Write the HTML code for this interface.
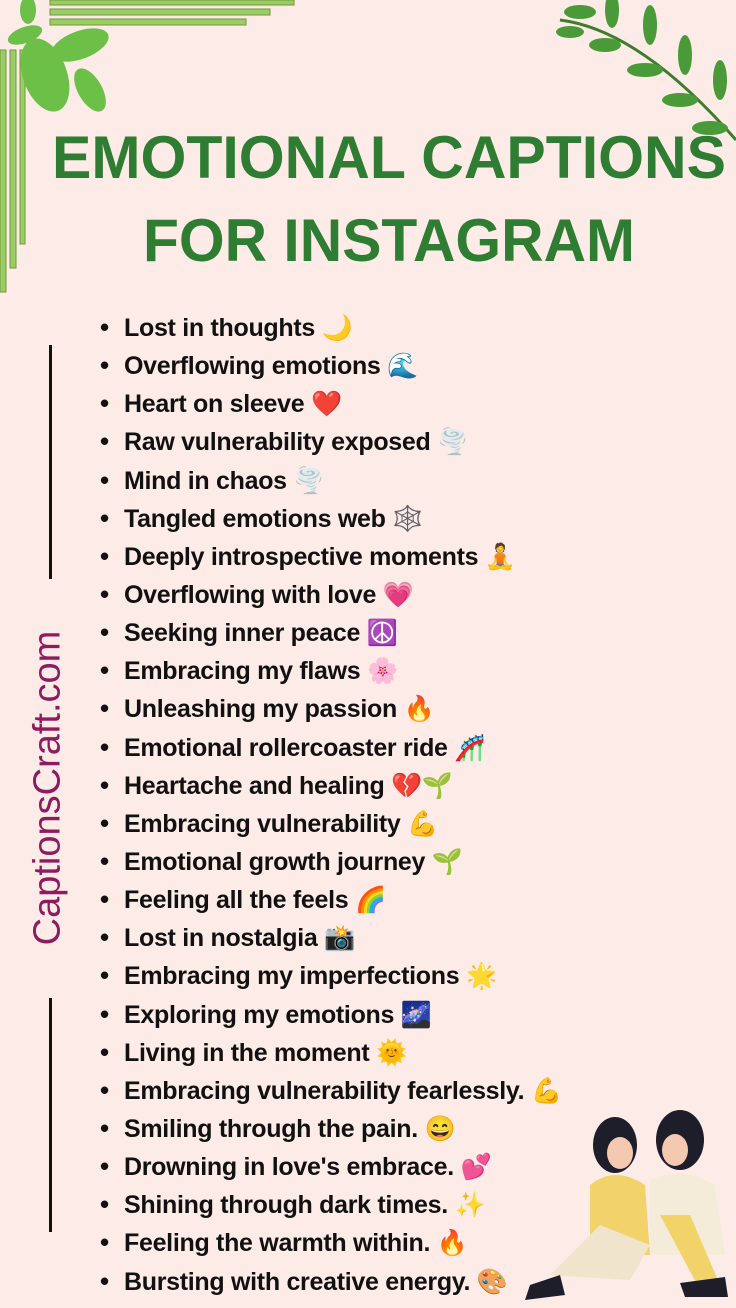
<!DOCTYPE html>
<html><head><meta charset="utf-8"><style>
body{margin:0;width:736px;height:1308px;background:#fcebe7;position:relative;overflow:hidden;font-family:"Liberation Sans",sans-serif}
.list{position:absolute;left:100px;top:308px;margin:0;padding:0;list-style:none}
.list li{font-size:25px;font-weight:bold;color:#111;height:38.15px;line-height:38px;white-space:nowrap;letter-spacing:-0.3px}
.list li:before{content:"•";display:inline-block;width:24px;font-size:26px}
.vl{position:absolute;left:49px;width:3px;background:#111}
.brand{position:absolute;left:48px;top:788px;transform:translate(-50%,-50%) rotate(-90deg);font-size:38px;color:#8c1c5e;white-space:nowrap}
</style></head><body>
<svg width="736" height="300" style="position:absolute;left:0;top:0">
<g fill="#9ccc65" stroke="#6b9a3a" stroke-width="1">
<rect x="50" y="0" width="244" height="5"/><rect x="50" y="9" width="220" height="6"/><rect x="50" y="19" width="196" height="6"/>
<rect x="0" y="50" width="6" height="242"/><rect x="10" y="50" width="6" height="218"/><rect x="20" y="50" width="5" height="194"/>
</g>
<g fill="#6cbf47">
<ellipse cx="45" cy="75" rx="22" ry="38" transform="rotate(-20 45 75)"/>
<ellipse cx="80" cy="45" rx="30" ry="14" transform="rotate(-20 80 45)"/>
<ellipse cx="90" cy="90" rx="12" ry="24" transform="rotate(-30 90 90)"/>
<ellipse cx="25" cy="35" rx="18" ry="8" transform="rotate(-20 25 35)"/>
<ellipse cx="28" cy="10" rx="8" ry="14"/>
</g>
<g fill="#4a9a3a">
<path d="M560 20 Q640 30 736 140" stroke="#3f7d2e" stroke-width="3" fill="none"/>
<ellipse cx="580" cy="12" rx="16" ry="7"/><ellipse cx="570" cy="32" rx="14" ry="6"/>
<ellipse cx="612" cy="10" rx="7" ry="18"/><ellipse cx="605" cy="45" rx="16" ry="7"/>
<ellipse cx="650" cy="25" rx="7" ry="20"/><ellipse cx="645" cy="70" rx="18" ry="7"/>
<ellipse cx="685" cy="55" rx="7" ry="20"/><ellipse cx="680" cy="100" rx="18" ry="7"/>
<ellipse cx="720" cy="80" rx="7" ry="20"/><ellipse cx="710" cy="128" rx="18" ry="7"/>
</g>
<g fill="#2f7d32" font-family="Liberation Sans,sans-serif" font-weight="bold">
<text x="52" y="178" font-size="60" textLength="674" lengthAdjust="spacingAndGlyphs">EMOTIONAL CAPTIONS</text>
<text x="143" y="261" font-size="60" textLength="492" lengthAdjust="spacingAndGlyphs">FOR INSTAGRAM</text>
</g>
</svg>
<div class="vl" style="top:345px;height:234px"></div>
<div class="vl" style="top:998px;height:234px"></div>
<div class="brand">CaptionsCraft.com</div>
<ul class="list">
<li>Lost in thoughts 🌙</li>
<li>Overflowing emotions 🌊</li>
<li>Heart on sleeve ❤️</li>
<li>Raw vulnerability exposed 🌪️</li>
<li>Mind in chaos 🌪️</li>
<li>Tangled emotions web 🕸️</li>
<li>Deeply introspective moments 🧘</li>
<li>Overflowing with love 💗</li>
<li>Seeking inner peace ☮️</li>
<li>Embracing my flaws 🌸</li>
<li>Unleashing my passion 🔥</li>
<li>Emotional rollercoaster ride 🎢</li>
<li>Heartache and healing 💔🌱</li>
<li>Embracing vulnerability 💪</li>
<li>Emotional growth journey 🌱</li>
<li>Feeling all the feels 🌈</li>
<li>Lost in nostalgia 📸</li>
<li>Embracing my imperfections 🌟</li>
<li>Exploring my emotions 🌌</li>
<li>Living in the moment 🌞</li>
<li>Embracing vulnerability fearlessly. 💪</li>
<li>Smiling through the pain. 😄</li>
<li>Drowning in love's embrace. 💕</li>
<li>Shining through dark times. ✨</li>
<li>Feeling the warmth within. 🔥</li>
<li>Bursting with creative energy. 🎨</li>
</ul>
<svg width="220" height="200" style="position:absolute;left:520px;top:1105px">
<ellipse cx="95" cy="40" rx="22" ry="28" fill="#1e1e2a"/>
<ellipse cx="160" cy="35" rx="24" ry="30" fill="#1e1e2a"/>
<ellipse cx="100" cy="48" rx="13" ry="16" fill="#f3c9b0"/>
<ellipse cx="155" cy="45" rx="13" ry="16" fill="#f3c9b0"/>
<path d="M70 80 Q95 60 125 80 L130 150 L70 150Z" fill="#f1d36a"/>
<path d="M130 75 Q160 60 195 80 L205 150 L130 150Z" fill="#f4ecd8"/>
<path d="M30 170 L80 120 L130 140 L110 175Z" fill="#f0e4cc"/>
<path d="M140 110 L170 110 L200 180 L180 185Z" fill="#f1d36a"/>
<path d="M10 180 L40 170 L45 190 L5 195Z" fill="#1e1e2a"/>
<path d="M160 178 L205 172 L208 192 L165 192Z" fill="#1e1e2a"/>
</svg>
</body></html>
